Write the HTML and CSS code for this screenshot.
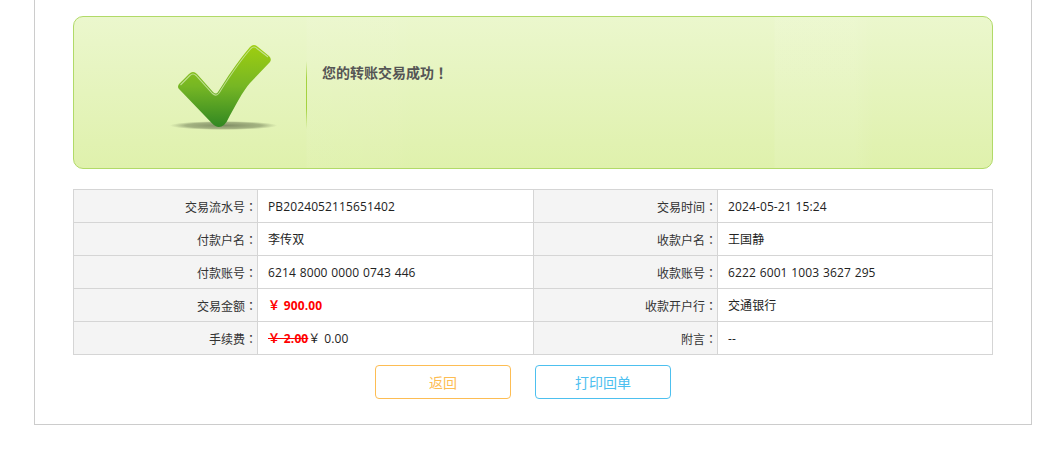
FILE: index.html
```html
<!DOCTYPE html>
<html>
<head>
<meta charset="utf-8">
<title>转账结果</title>
<link rel="stylesheet" href="styles.css">
</head>
<body>
<div class="panel">
  <div class="banner">
    <div class="banner-icon">
      <svg width="120" height="100" viewBox="0 0 120 100" aria-hidden="true">
        <defs>
          <linearGradient id="chk" gradientUnits="userSpaceOnUse" x1="0" y1="11" x2="0" y2="94">
            <stop offset="0" stop-color="#9fce10"/>
            <stop offset="0.5" stop-color="#76b624"/>
            <stop offset="1" stop-color="#2f8622"/>
          </linearGradient>
          <radialGradient id="shd">
            <stop offset="0" stop-color="#66724f" stop-opacity=".8"/>
            <stop offset=".7" stop-color="#7c8a60" stop-opacity=".6"/>
            <stop offset="1" stop-color="#8c9a70" stop-opacity="0"/>
          </radialGradient>
        </defs>
        <ellipse cx="56.5" cy="91.5" rx="54" ry="4.5" fill="url(#shd)"/>
        <path d="M12 50 Q10 53 12 55 L44.7 89 Q51 96 57 91 L59.7 87.7 C68 72 76 57 83 49 L103 28 Q105 25 102 22 L91 13 Q87 9 83 13 C70 28 60 44 51 58 Q49 61 46 58 L30 40 Q26 36 22 40 Z" fill="url(#chk)"/>
        <path d="M13.5 51 L23 41.5 Q26 38.5 29 41.5 L45.5 59.5 Q49 63 52 59 C61 45 71 29 84 14.5 Q87 11.5 90 14.5 L101 23" fill="none" stroke="#c9e4a0" stroke-width="1.1" stroke-opacity=".85"/>
      </svg>
    </div>
    <div class="banner-sep"></div>
    <p class="banner-text">您的转账交易成功<span class="punct">！</span></p>
  </div>

  <table class="detail">
    <colgroup>
      <col class="c-label"><col class="c-left"><col class="c-label"><col class="c-right">
    </colgroup>
    <tbody>
      <tr><th>交易流水号<span class="punct">：</span></th><td>PB2024052115651402</td><th>交易时间<span class="punct">：</span></th><td>2024-05-21 15:24</td></tr>
      <tr><th>付款户名<span class="punct">：</span></th><td>李传双</td><th>收款户名<span class="punct">：</span></th><td>王国静</td></tr>
      <tr><th>付款账号<span class="punct">：</span></th><td>6214 8000 0000 0743 446</td><th>收款账号<span class="punct">：</span></th><td>6222 6001 1003 3627 295</td></tr>
      <tr><th>交易金额<span class="punct">：</span></th><td><span class="money">￥ 900.00</span></td><th>收款开户行<span class="punct">：</span></th><td>交通银行</td></tr>
      <tr><th>手续费<span class="punct">：</span></th><td><del class="money">￥ 2.00</del>￥ 0.00</td><th>附言<span class="punct">：</span></th><td>--</td></tr>
    </tbody>
  </table>

  <div class="actions">
    <button type="button" class="btn btn-back">返回</button>
    <button type="button" class="btn btn-print">打印回单</button>
  </div>
</div>
</body>
</html>
```
FILE: styles.css
```css
* { box-sizing: border-box; }
html, body { margin: 0; padding: 0; background: #fff; }
body {
  font-family: "Open Sans", "Noto Sans CJK SC", "Liberation Sans", sans-serif;
  font-size: 12px;
  color: #333;
  height: 449px;
  overflow: hidden;
}
.panel {
  width: 998px;
  height: 425px;
  margin-left: 34px;
  padding: 16px 38px 0;
  border: 1px solid #ccc;
  border-top: none;
}
.banner {
  display: flex;
  align-items: flex-start;
  width: 920px;
  height: 153px;
  border: 1px solid #b1da68;
  border-radius: 10px;
  background:
    linear-gradient(90deg, transparent 232px, rgba(255,255,255,.05) 233px, rgba(255,255,255,.03) 320px, transparent 340px),
    linear-gradient(90deg, transparent 700px, rgba(255,255,255,.08) 701px, rgba(255,255,255,.08) 780px, transparent 800px),
    linear-gradient(180deg, #ebf7cd 0%, #dff1ac 100%);
}
.banner-icon {
  width: 232px;
  flex: none;
  padding: 17px 0 0 93px;
  line-height: 0;
}
.banner-sep {
  width: 1px;
  height: 68px;
  margin-top: 44px;
  flex: none;
  background: linear-gradient(180deg, rgba(160,208,60,0) 0%, #a4d23f 25%, #a4d23f 70%, rgba(160,208,60,0) 100%);
}
.banner-text {
  margin: 44px 0 0 15px;
  font-family: "Noto Sans CJK SC", sans-serif;
  font-size: 14px;
  line-height: 22px;
  font-weight: 700;
  color: #555;
}
.punct {
  font-family: "Noto Sans CJK TC", sans-serif;
}
.detail {
  width: 919px;
  margin-top: 20px;
  border-collapse: collapse;
  table-layout: fixed;
}
.c-label { width: 184px; }
.c-left { width: 276px; }
.c-right { width: 275px; }
.detail th, .detail td {
  height: 33px;
  padding: 2px 0 0;
  border: 1px solid #d5d5d5;
  font-size: 12px;
  line-height: 18px;
}
.detail th {
  text-align: right;
  font-weight: 400;
  background: #f4f4f4;
  color: #333;
}
.detail td {
  padding-left: 10px;
  color: #222;
  letter-spacing: .12px;
  word-spacing: .5px;
}
.money {
  color: #f00;
  font-weight: 700;
}
.actions {
  display: flex;
  justify-content: center;
  gap: 24px;
  margin-top: 10px;
  padding-right: 20px;
}
.btn {
  width: 136px;
  height: 34px;
  padding: 0;
  background: #fff;
  border: 1px solid;
  border-radius: 4px;
  font-family: "Noto Sans CJK SC", sans-serif;
  font-size: 14px;
}
.btn-back { border-color: #fdbd53; color: #fdbd53; }
.btn-print { border-color: #4dc0ef; color: #4dc0ef; }
```
